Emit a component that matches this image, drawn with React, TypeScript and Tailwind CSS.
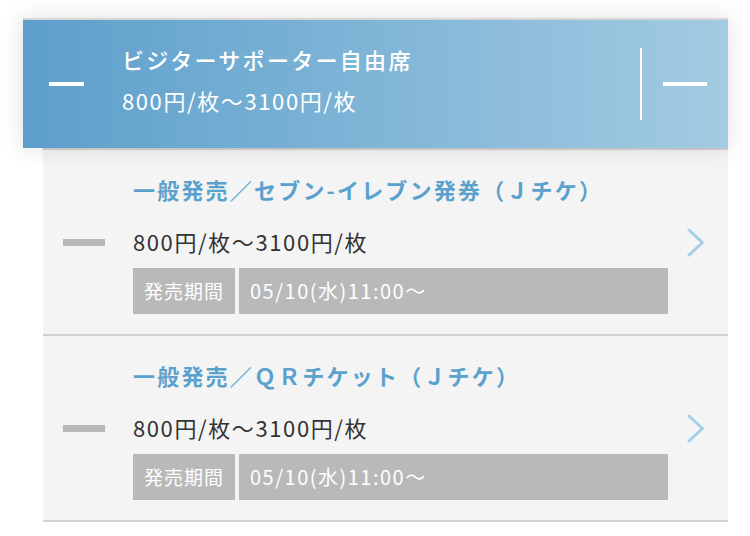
import React from 'react';

type Ticket = {
  title: string;
  price: string;
  period: string;
};

const tickets: Ticket[] = [
  {
    title: '一般発売／セブン-イレブン発券（Ｊチケ）',
    price: '800円/枚〜3100円/枚',
    period: '05/10(水)11:00〜',
  },
  {
    title: '一般発売／ＱＲチケット（Ｊチケ）',
    price: '800円/枚〜3100円/枚',
    period: '05/10(水)11:00〜',
  },
];

const font = { fontFamily: '"Noto Sans CJK JP", "Noto Sans", sans-serif' };

function Chevron() {
  return (
    <svg width="18" height="29" viewBox="0 0 18 29" fill="none" className="shrink-0">
      <polyline
        points="2,2 15.5,14.5 2,27"
        stroke="#a3cfea"
        strokeWidth="3"
        strokeLinecap="round"
        strokeLinejoin="round"
      />
    </svg>
  );
}

function TicketRow({ ticket }: { ticket: Ticket }) {
  return (
    <div className="flex items-center border-b-2 border-[#d1d1d1]">
      <div className="w-[90px] shrink-0 flex justify-start pl-[20px]">
        <div className="w-[42px] h-[7px] bg-[#b9b9b9]" />
      </div>
      <div className="flex-1 pt-[21px] pb-[20px]">
        <div className="text-[22px] leading-[36px] font-bold tracking-[2.2px] text-[#5ba1cd] whitespace-nowrap">
          {ticket.title}
        </div>
        <div className="mt-[16px] text-[22px] leading-[36px] tracking-[1.6px] text-[#333333]">
          {ticket.price}
        </div>
        <div className="mt-[9px] flex gap-[4px] h-[46px] w-[535px]">
          <div className="w-[102px] bg-[#b9b9b9] text-white text-[19px] tracking-[1px] flex items-center justify-center">
            発売期間
          </div>
          <div className="flex-1 bg-[#b9b9b9] text-white text-[20px] tracking-[1.5px] flex items-center pl-[11px]">
            {ticket.period}
          </div>
        </div>
      </div>
      <div className="w-[60px] shrink-0 flex justify-center pr-[4px]">
        <Chevron />
      </div>
    </div>
  );
}

export default function App() {
  return (
    <div className="w-[750px] h-[536px] bg-white pt-[18px] overflow-hidden" style={font}>
      <div className="relative z-10 ml-[23px] w-[705px] border-t-2 border-[#d6d6d6] shadow-[0_0_22px_rgba(0,0,0,0.13)]">
        <div className="h-[128px] flex items-center bg-gradient-to-r from-[#5c9fcb] to-[#a3cbe2]">
          <div className="ml-[26px] w-[35px] h-[4px] bg-white shrink-0" />
          <div className="self-start ml-[38px] pt-[23px] flex-1 text-white">
            <div className="text-[22px] leading-[32px] font-medium tracking-[2.3px]">
              ビジターサポーター自由席
            </div>
            <div className="mt-[9px] text-[22px] leading-[32px] tracking-[1.6px]">
              800円/枚〜3100円/枚
            </div>
          </div>
          <div className="w-[2px] h-[72px] bg-white shrink-0" />
          <div className="ml-[21px] mr-[21px] w-[44px] h-[4px] bg-white shrink-0" />
        </div>
      </div>
      <div className="ml-[43px] w-[685px] bg-[#f4f4f4] border-t-2 border-[#d1d1d1]">
        {tickets.map((t) => (
          <TicketRow key={t.title} ticket={t} />
        ))}
      </div>
    </div>
  );
}
